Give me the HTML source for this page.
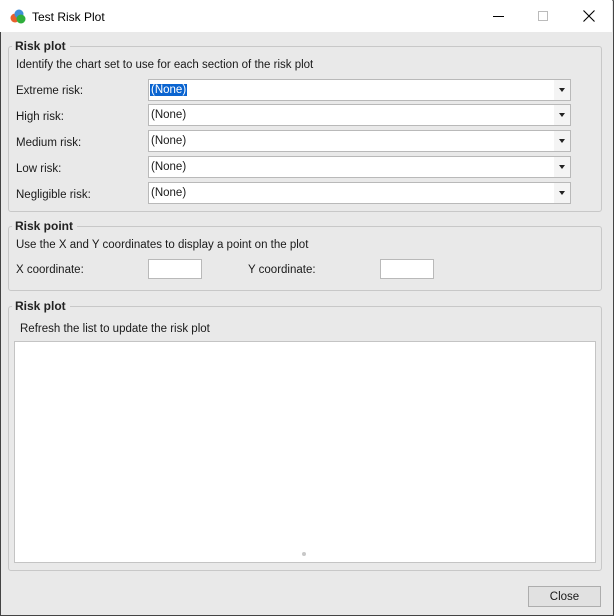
<!DOCTYPE html>
<html><head><style>
*{margin:0;padding:0;box-sizing:border-box}
body{width:614px;height:616px;position:relative;overflow:hidden;background:#f0f0f0;font-family:"Liberation Sans",sans-serif;font-size:11.5px;color:#1a1a1a}
.a{position:absolute}
.win{left:0;top:0;width:614px;height:616px;border:1px solid #444;border-top:1px solid #888;background:#e9e9e9}
.title{left:0;top:0;width:612px;height:32px;background:#fff}
.grp{border:1px solid #c8c8c8;border-radius:3px}
.lg{background:#e9e9e9;font-weight:bold;padding:0 4px 0 3px;font-size:12px;color:#222}
.cb{background:#fff;border:1px solid #b9b9b9;height:22px;width:423px;left:148px}
.cb span{position:absolute;left:2px;top:4px}
.cb i{position:absolute;right:0;top:0;width:16px;height:20px;background:#f4f4f4}
.cb i:after{content:"";position:absolute;left:5px;top:8px;border-left:3px solid transparent;border-right:3px solid transparent;border-top:4px solid #222}
.in{background:#fff;border:1px solid #b9b9b9;width:54px;height:20px}
</style></head><body>
<div class="a win"></div>
<div class="a title"></div>
<svg class="a" style="left:9px;top:8px" width="18" height="16" viewBox="0 0 18 16"><circle cx="6" cy="10" r="4.5" fill="#e8602c"/><circle cx="10" cy="6" r="4.5" fill="#3f8fd8"/><circle cx="12" cy="11" r="4.5" fill="#2fae3c"/></svg>
<div class="a" style="left:32px;top:10px;font-size:12px;color:#000">Test Risk Plot</div>
<div class="a" style="left:493px;top:16px;width:11px;height:1px;background:#000"></div>
<div class="a" style="left:538px;top:11px;width:10px;height:10px;border:1px solid #bbb"></div>
<svg class="a" style="left:583px;top:10px" width="12" height="12"><path d="M0.5 0.5L11.5 11.5M11.5 0.5L0.5 11.5" stroke="#000" stroke-width="1.1"/></svg>

<div class="a grp" style="left:8px;top:46px;width:594px;height:166px"></div>
<div class="a lg" style="left:12px;top:39px">Risk plot</div>
<div class="a" style="left:16px;top:59px">Identify the chart set to use for each section of the risk plot</div>
<div class="a" style="left:16px;top:85px">Extreme risk:</div>
<div class="a" style="left:16px;top:111px">High risk:</div>
<div class="a" style="left:16px;top:137px">Medium risk:</div>
<div class="a" style="left:16px;top:163px">Low risk:</div>
<div class="a" style="left:16px;top:189px">Negligible risk:</div>
<div class="a cb" style="top:79px"><span style="background:#0a64d0;color:#fff;padding:0 1px;left:1px">(None)</span><i></i></div>
<div class="a cb" style="top:104px"><span>(None)</span><i></i></div>
<div class="a cb" style="top:130px"><span>(None)</span><i></i></div>
<div class="a cb" style="top:156px"><span>(None)</span><i></i></div>
<div class="a cb" style="top:182px"><span>(None)</span><i></i></div>

<div class="a grp" style="left:8px;top:226px;width:594px;height:65px"></div>
<div class="a lg" style="left:12px;top:219px">Risk point</div>
<div class="a" style="left:16px;top:239px">Use the X and Y coordinates to display a point on the plot</div>
<div class="a" style="left:16px;top:264px">X coordinate:</div>
<div class="a in" style="left:148px;top:259px"></div>
<div class="a" style="left:248px;top:264px">Y coordinate:</div>
<div class="a in" style="left:380px;top:259px"></div>

<div class="a grp" style="left:8px;top:306px;width:594px;height:265px"></div>
<div class="a lg" style="left:12px;top:299px">Risk plot</div>
<div class="a" style="left:20px;top:323px">Refresh the list to update the risk plot</div>
<div class="a" style="left:14px;top:341px;width:582px;height:222px;background:#fff;border:1px solid #c4c4c4"></div>
<div class="a" style="left:302px;top:552px;width:4px;height:4px;border-radius:2px;background:#c8c8c8"></div>

<div class="a" style="left:528px;top:586px;width:73px;height:21px;background:#e1e1e1;border:1px solid #adadad;text-align:center;line-height:21px">Close</div>
</body></html>
